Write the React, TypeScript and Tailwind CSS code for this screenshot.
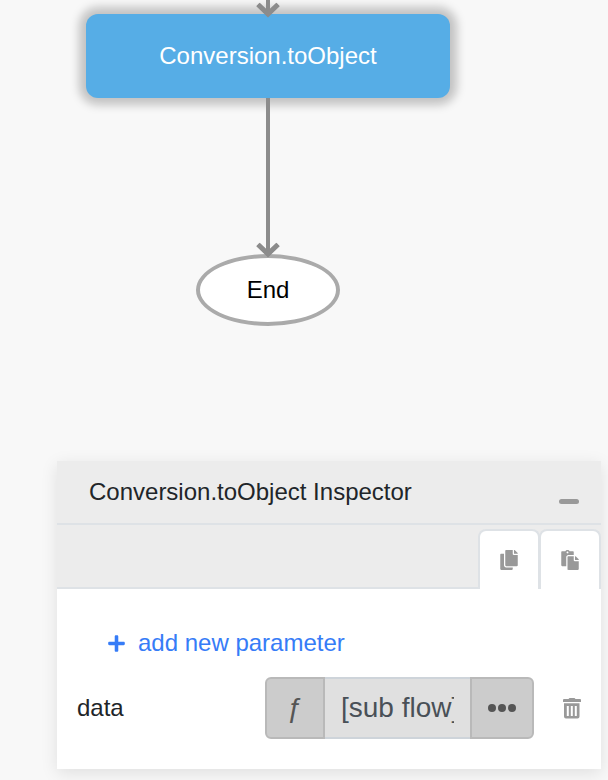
import React from "react";
import { FaCopy, FaPaste, FaPlus } from "react-icons/fa";

function Connector({ className, length }: { className: string; length: number }) {
  return (
    <svg
      aria-hidden="true"
      className={`relative z-10 w-6 overflow-visible ${className}`}
      viewBox={`0 0 24 ${length}`}
      fill="none"
      stroke="#8c8c8c"
      strokeWidth="4"
    >
      <path d={`M12 0V${length}M2 ${length - 9.500}L12 ${length}L22 ${length - 9.500}`} />
      <path d={`M2 ${length - 9.500}L12 ${length}L22 ${length - 9.500}`} strokeWidth="5" />
    </svg>
  );
}

function TrashIcon() {
  return (
    <svg aria-hidden="true" viewBox="0 0 18 21" className="h-[21px] w-[18px]" fill="#999999">
      <path d="M6.500 0h5l1 1h4.500q1 0 1 1v2H0V2q0-1 1-1h4.500z" />
      <path
        fillRule="evenodd"
        d="M1 5.200h15.500V18.500q0 2-2 2H3q-2 0-2-2zM3.800 8v10h2V8zM7.800 8v10h2V8zM11.800 8v10h2V8z"
      />
    </svg>
  );
}

export default function App() {
  return (
    <main className="bg-[#f8f8f8] pb-[11px] font-['Liberation_Sans',Arial,sans-serif] text-2xl text-[#212529]">
      <section aria-label="Flow" className="flex h-[461px] w-[536px] flex-col items-center">
        <Connector className="h-[14px]" length={14} />
        <button
          type="button"
          className="h-[84px] w-[364px] rounded-xl bg-[#56ade6] text-white shadow-[0_0_10px_7px_rgba(0,0,0,0.22)]"
        >
          Conversion.toObject
        </button>
        <Connector className="h-[156px]" length={156} />
        <div className="flex h-[72px] w-36 items-center justify-center rounded-[50%] border-4 border-[#aaaaaa] bg-white text-black">
          End
        </div>
      </section>

      <section
        aria-label="Inspector"
        className="mr-[7px] ml-[57px] bg-white shadow-[0_4px_16px_rgba(0,0,0,0.1)]"
      >
        <header className="flex h-16 items-center justify-between border-b-2 border-[#dee2e6] bg-[#ececec] pr-[22px] pl-8">
          <h2>Conversion.toObject Inspector</h2>
          <button type="button" aria-label="Minimize" className="flex h-10 items-end pb-1">
            <span className="mb-1 h-[5px] w-5 rounded-sm bg-[#999999]" />
          </button>
        </header>
        <div className="flex h-16 items-end justify-end border-b-2 border-[#dee2e6] bg-[#ececec]">
          <button
            type="button"
            aria-label="Copy"
            className="-mb-[2px] flex h-[60px] w-[62px] items-center justify-center rounded-t-lg border-2 border-b-0 border-[#dee2e6] bg-white text-[#999999]"
          >
            <FaCopy size={20} />
          </button>
          <button
            type="button"
            aria-label="Paste"
            className="-mb-[2px] -ml-px flex h-[60px] w-[62px] items-center justify-center rounded-t-lg border-2 border-b-0 border-[#dee2e6] bg-white text-[#999999]"
          >
            <FaPaste size={20} />
          </button>
        </div>

        <div className="px-5 pt-9 pb-[30px]">
          <button type="button" className="ml-[30px] flex h-9 items-center gap-3 text-[#367cf7]">
            <FaPlus size={19} />
            add new parameter
          </button>
          <div className="mt-4 flex items-center">
            <label htmlFor="data" className="flex-1">
              data
            </label>
            <div className="flex h-[62px] w-[269px]">
              <button
                type="button"
                aria-label="Function"
                className="w-[60px] rounded-l-md border-2 border-[#b9b9b9] bg-[#cccccc] text-[28px] text-[#555555]"
              >
                ƒ
              </button>
              <input
                id="data"
                readOnly
                defaultValue="[sub flow]"
                className="min-w-0 flex-1 border-y-2 border-[#ced4da] bg-[#e0e0e0] px-4 text-[28px] text-[#495057] outline-none"
              />
              <button
                type="button"
                aria-label="More"
                className="flex w-16 items-center justify-center rounded-r-md border-2 border-[#b9b9b9] bg-[#cccccc]"
              >
                <svg aria-hidden="true" viewBox="0 0 28 8" className="h-2 w-7" fill="#555555">
                  <circle cx="4" cy="4" r="4" />
                  <circle cx="14" cy="4" r="4" />
                  <circle cx="24" cy="4" r="4" />
                </svg>
              </button>
            </div>
            <button type="button" aria-label="Delete data" className="ml-[29px]">
              <TrashIcon />
            </button>
          </div>
        </div>
      </section>
    </main>
  );
}
